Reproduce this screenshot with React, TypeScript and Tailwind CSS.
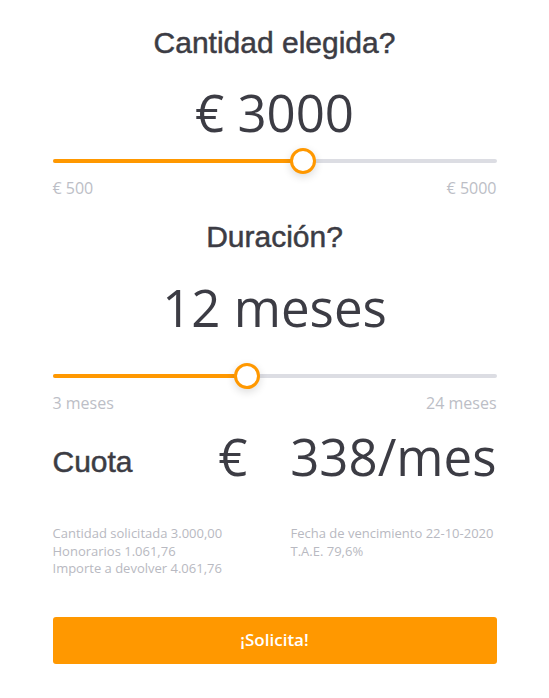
import React from "react";

const heading =
  "font-['Liberation_Sans',Arial,sans-serif] text-[30px] leading-[36px] text-[#3c3c44] [-webkit-text-stroke:0.5px_#3c3c44]";
const big = "font-['Open_Sans',sans-serif] text-[51px] leading-[50px] text-[#3c3c44]";
const label = "font-['Open_Sans',sans-serif] text-[16px] leading-[24px] text-[#bcbec6]";

function Slider({ pct }: { pct: number }) {
  return (
    <div className="relative h-[26px]">
      <div className="absolute left-0 right-0 top-[11px] h-[4px] rounded-full bg-[#dcdde3]" />
      <div
        className="absolute left-0 top-[11px] h-[4px] rounded-full bg-[#ff9800]"
        style={{ width: `${pct}%` }}
      />
      <div
        className="absolute top-0 h-[26px] w-[26px] -translate-x-1/2 rounded-full border-[3px] border-[#ff9800] bg-white shadow-[0_3px_8px_rgba(0,0,0,0.14)]"
        style={{ left: `${pct}%` }}
      />
    </div>
  );
}

export default function App() {
  return (
    <div className="min-h-screen bg-white">
      <div className="mx-auto w-[444px] pt-[25px]">
        <h2 className={`${heading} text-center`}>Cantidad elegida?</h2>
        <p className={`${big} mt-[26px] text-center`}>€ 3000</p>
        <div className="mt-[11px]">
          <Slider pct={56.5} />
        </div>
        <div className={`${label} mt-[2px] flex justify-between`}>
          <span>€ 500</span>
          <span>€ 5000</span>
        </div>

        <h2 className={`${heading} mt-[19px] text-center`}>Duración?</h2>
        <p className={`${big} mt-[27px] text-center`}>12 meses</p>
        <div className="mt-[31px]">
          <Slider pct={43.9} />
        </div>
        <div className={`${label} mt-[2px] flex justify-between`}>
          <span>3 meses</span>
          <span>24 meses</span>
        </div>

        <div className="mt-[16px] grid grid-cols-[237px_1fr]">
          <div className="flex items-start justify-between pr-[42px]">
            <span className={`${heading} pt-[13px]`}>Cuota</span>
            <span className={big}>€</span>
          </div>
          <span className={`${big} text-right`}>338/mes</span>
        </div>

        <div className="mt-[44px] grid grid-cols-[238px_1fr] font-['Open_Sans',sans-serif] text-[13px] leading-[17.5px] text-[#b8b9c1]">
          <div>
            <p>Cantidad solicitada 3.000,00</p>
            <p>Honorarios 1.061,76</p>
            <p>Importe a devolver 4.061,76</p>
          </div>
          <div>
            <p>Fecha de vencimiento 22-10-2020</p>
            <p>T.A.E. 79,6%</p>
          </div>
        </div>

        <button className="mt-[39px] flex h-[47px] w-full items-center justify-center rounded-[3px] bg-[#ff9800] font-['Open_Sans',sans-serif] text-[17px] font-semibold text-white">
          ¡Solicita!
        </button>
      </div>
    </div>
  );
}
